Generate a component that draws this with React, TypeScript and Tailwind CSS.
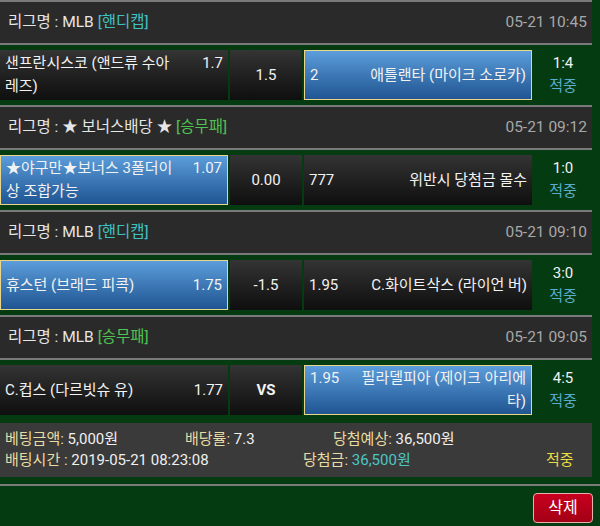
import React from "react";

type Side = { name: string; odds: string; picked?: boolean };

type Match = {
  league: string;
  tag: string;
  tagColor: string;
  time: string;
  home: Side;
  line: string;
  bold?: boolean;
  away: Side;
  score: string;
};

const MATCHES: Match[] = [
  {
    league: "리그명 : MLB",
    tag: "[핸디캡]",
    tagColor: "text-[#3ec3c3]",
    time: "05-21 10:45",
    home: { name: "샌프란시스코 (앤드류 수아레즈)", odds: "1.7" },
    line: "1.5",
    away: { name: "애틀랜타 (마이크 소로카)", odds: "2", picked: true },
    score: "1:4",
  },
  {
    league: "리그명 : ★ 보너스배당 ★",
    tag: "[승무패]",
    tagColor: "text-[#4fc24f]",
    time: "05-21 09:12",
    home: { name: "★야구만★보너스 3폴더이상 조합가능", odds: "1.07", picked: true },
    line: "0.00",
    away: { name: "위반시 당첨금 몰수", odds: "777" },
    score: "1:0",
  },
  {
    league: "리그명 : MLB",
    tag: "[핸디캡]",
    tagColor: "text-[#3ec3c3]",
    time: "05-21 09:10",
    home: { name: "휴스턴 (브래드 피콕)", odds: "1.75", picked: true },
    line: "-1.5",
    away: { name: "C.화이트삭스 (라이언 버)", odds: "1.95" },
    score: "3:0",
  },
  {
    league: "리그명 : MLB",
    tag: "[승무패]",
    tagColor: "text-[#4fc24f]",
    time: "05-21 09:05",
    home: { name: "C.컵스 (다르빗슈 유)", odds: "1.77" },
    line: "VS",
    bold: true,
    away: { name: "필라델피아 (제이크 아리에타)", odds: "1.95", picked: true },
    score: "4:5",
  },
];

const cellBase = "flex h-[50px] w-[228px] items-center px-[5px] text-[#f2f2f2]";
const darkCell = "bg-gradient-to-b from-[#343434] to-[#0f0f0f]";
const blueCell =
  "border border-[#ead68a] bg-gradient-to-b from-[#5c9ddb] to-[#1f5592]";

function HomeCell({ side }: { side: Side }) {
  return (
    <div className={`${cellBase} ${side.picked ? blueCell : darkCell}`}>
      <div className="flex w-full items-start justify-between leading-[23px]">
        <span className="w-[176px]">{side.name}</span>
        <span>{side.odds}</span>
      </div>
    </div>
  );
}

function AwayCell({ side }: { side: Side }) {
  return (
    <div className={`${cellBase} ${side.picked ? blueCell : darkCell}`}>
      <div className="flex w-full items-start justify-between leading-[23px]">
        <span>{side.odds}</span>
        <span className="w-[176px] text-right">{side.name}</span>
      </div>
    </div>
  );
}

export default function App() {
  return (
    <div
      className="min-h-[526px] w-[600px] bg-[#053b11] text-[15px]"
      style={{ fontFamily: "Roboto, 'Noto Sans CJK KR', sans-serif" }}
    >
      <div className="w-[592px]">
        {MATCHES.map((m) => (
          <div key={m.time}>
            <div className="flex h-[45px] items-center justify-between border-y-2 border-[#7a7a7a] bg-[#2a2a2a] pl-2 pr-[5px] text-[15.5px]">
              <span className="text-[#e6e6e6]">
                {m.league} <span className={m.tagColor}>{m.tag}</span>
              </span>
              <span className="text-[#a8a8a8]">{m.time}</span>
            </div>
            <div className="flex gap-[2px] py-[5px]">
              <HomeCell side={m.home} />
              <div
                className={`flex h-[50px] w-[72px] items-center justify-center ${darkCell} text-[#f2f2f2] ${
                  m.bold ? "font-bold" : ""
                }`}
              >
                {m.line}
              </div>
              <AwayCell side={m.away} />
              <div className="flex flex-1 flex-col items-center justify-center leading-[23px]">
                <span className="text-[#f2f2f2]">{m.score}</span>
                <span className="text-[#57acd0]">적중</span>
              </div>
            </div>
          </div>
        ))}

        <div className="mt-[3px] bg-[#3a3a3a] px-[5px] py-[6px] leading-[21px] text-[#f0f0f0]">
          <div className="flex">
            <span className="w-[180px]">
              <span className="text-[#e9dca2]">베팅금액:</span> 5,000원
            </span>
            <span className="w-[148px]">
              <span className="text-[#e9dca2]">배당률:</span> 7.3
            </span>
            <span>
              <span className="text-[#e9dca2]">당첨예상:</span> 36,500원
            </span>
          </div>
          <div className="flex">
            <span className="w-[298px]">
              <span className="text-[#e9dca2]">배팅시간 :</span> 2019-05-21 08:23:08
            </span>
            <span className="w-[243px]">
              <span className="text-[#e9dca2]">당첨금:</span>{" "}
              <span className="text-[#4cc6c6]">36,500원</span>
            </span>
            <span className="text-[#e8de45]">적중</span>
          </div>
        </div>
      </div>

      <div className="mt-[7px] border-t-2 border-[#7a7a7a]" />
      <div className="flex justify-end pr-[7px] pt-[7px]">
        <button className="h-[30px] w-[60px] rounded-[4px] border border-[#e8b0b0] bg-gradient-to-b from-[#c8001f] to-[#a30016] text-[16px] text-white">
          삭제
        </button>
      </div>
    </div>
  );
}
